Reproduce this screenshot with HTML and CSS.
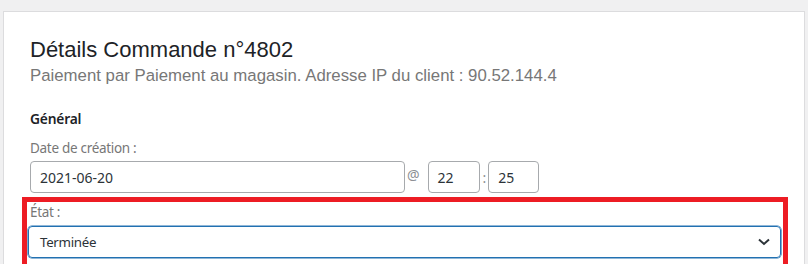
FILE: index.html
```html
<!DOCTYPE html>
<html lang="fr">
<head>
<meta charset="utf-8">
<title>Détails Commande</title>
<link rel="stylesheet" href="styles.css">
</head>
<body>
<div class="card">
  <h2 class="title">Détails Commande n°4802</h2>
  <p class="meta">Paiement par Paiement au magasin. Adresse IP du client : 90.52.144.4</p>
  <h3 class="section">Général</h3>
  <div class="field">
    <div class="label">Date de création :</div>
    <div class="date-row">
      <div class="input date">2021-06-20</div>
      <span class="sep at">@</span>
      <div class="input hm">22</div>
      <span class="sep colon">:</span>
      <div class="input hm mm">25</div>
    </div>
  </div>
  <div class="highlight">
    <div class="label state">État :</div>
    <div class="select">
      <span>Terminée</span>
      <svg class="chev" width="12" height="8" viewBox="0 0 12 8" aria-hidden="true"><path d="M1 1.5 L6 6 L11 1.5" fill="none" stroke="#2c3338" stroke-width="2"/></svg>
    </div>
  </div>
</div>
</body>
</html>
```
FILE: styles.css
```css
html, body {
  margin: 0;
  padding: 0;
}
body {
  background: #f0f0f1;
  width: 808px;
  height: 264px;
  overflow: hidden;
  padding-top: 11px;
  box-sizing: border-box;
}
.card {
  margin-left: 3px;
  width: 802px;
  box-sizing: border-box;
  background: #fff;
  border: 1px solid #dcdcde;
  padding: 24px 16px 20px 26px;
  font-family: "Noto Sans", "Open Sans", sans-serif;
}
.title {
  margin: 0;
  font-family: "Liberation Sans", Arial, sans-serif;
  font-weight: 400;
  font-size: 22px;
  line-height: 27px;
  color: #1d2327;
}
.meta {
  margin: 1px 0 0;
  font-family: "Liberation Sans", Arial, sans-serif;
  font-size: 16.8px;
  line-height: 24px;
  color: #777;
}
.section {
  margin: 21px 0 0;
  font-size: 13.8px;
  letter-spacing: -0.2px;
  line-height: 20px;
  font-weight: 600;
  color: #1d2327;
}
.field {
  margin-top: 9px;
}
.label {
  font-size: 13.5px;
  letter-spacing: -0.3px;
  line-height: 20px;
  color: #777;
  margin-bottom: 3px;
}
.date-row {
  display: flex;
  align-items: center;
}
.input {
  box-sizing: border-box;
  height: 32px;
  border: 1px solid #a7aaad;
  border-radius: 4px;
  padding: 0 9px;
  display: flex;
  align-items: center;
  font-size: 14px;
  color: #2c3338;
}
.date {
  width: 375px;
}
.hm {
  width: 52px;
}
.mm {
  width: 51px;
}
.sep {
  color: #8c8f94;
  font-size: 14px;
}
.at {
  margin: -6px 8px 0 2px;
}
.colon {
  margin: 0 2px 0 3px;
}
.highlight {
  margin: 4px 0 0 -8px;
  border: 5px solid #ed1c24;
  padding: 0 2px 12px 1px;
}
.state {
  padding-left: 2px;
  margin-bottom: 4px;
}
.select {
  box-sizing: border-box;
  height: 32px;
  border: 1px solid #2271b1;
  box-shadow: 0 0 0 0.6px #2271b1;
  border-radius: 4px;
  display: flex;
  align-items: center;
  justify-content: space-between;
  padding: 0 10px 0 11px;
  font-size: 13.3px;
  letter-spacing: -0.3px;
  color: #2c3338;
}
.chev {
  display: block;
}
```
